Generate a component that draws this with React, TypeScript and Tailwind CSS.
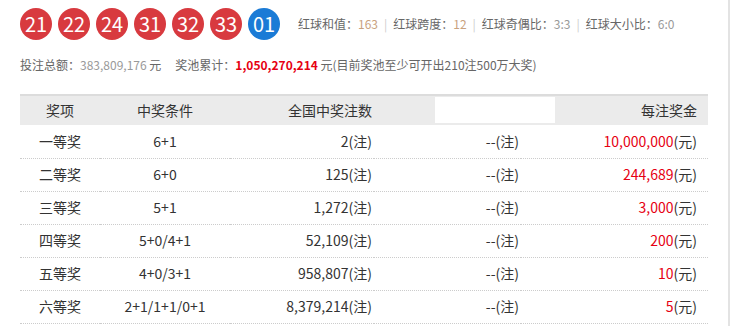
import React from "react"

const reds = ["21", "22", "24", "31", "32", "33"]
const blue = "01"

const stats = [
    { label: "红球和值：", value: "163", color: "text-[#c9a27e]" },
    { label: "红球跨度：", value: "12", color: "text-[#c9a27e]" },
    { label: "红球奇偶比：", value: "3:3", color: "text-[#999]" },
    { label: "红球大小比：", value: "6:0", color: "text-[#999]" },
]

const rows = [
    { name: "一等奖", cond: "6+1", count: "2", prize: "10,000,000" },
    { name: "二等奖", cond: "6+0", count: "125", prize: "244,689" },
    { name: "三等奖", cond: "5+1", count: "1,272", prize: "3,000" },
    { name: "四等奖", cond: "5+0/4+1", count: "52,109", prize: "200" },
    { name: "五等奖", cond: "4+0/3+1", count: "958,807", prize: "10" },
    { name: "六等奖", cond: "2+1/1+1/0+1", count: "8,379,214", prize: "5" },
]

function Ball({ n, isBlue }: { n: string; isBlue?: boolean }) {
    return (
        <span
            className={`flex h-8 w-8 items-center justify-center rounded-full text-[20px] text-white ${isBlue ? "bg-[#1b7bd6]" : "bg-[#d83a3f]"}`}
        >
            {n}
        </span>
    )
}

export default function App() {
    return (
        <div
            className="h-[326px] w-[730px] overflow-hidden border-r-2 border-[#e3e3e3] bg-white text-[#333]"
            style={{ fontFamily: '"Noto Sans CJK SC", sans-serif' }}
        >
            <div className="flex items-center pl-5 pt-2">
                <div className="flex gap-[6px]">
                    {reds.map((n) => (
                        <Ball key={n} n={n} />
                    ))}
                    <Ball n={blue} isBlue />
                </div>
                <div className="ml-[18px] flex items-center text-[12px] text-[#666]">
                    {stats.map((s, i) => (
                        <span key={s.label} className="flex items-center">
                            {i > 0 && <span className="mx-[6px] text-[#ccc]">|</span>}
                            {s.label}
                            <span className={s.color}>{s.value}</span>
                        </span>
                    ))}
                </div>
            </div>

            <div className="mt-[16px] pl-5 text-[12px] text-[#666]">
                投注总额：<span className="text-[#999]">383,809,176</span> 元
                <span className="ml-[14px]">奖池累计：</span>
                <span className="font-bold text-[#e60012]">1,050,270,214</span> 元(目前奖池至少可开出210注500万大奖)
            </div>

            <table className="ml-5 mt-[20px] w-[688px] table-fixed border-collapse text-[14px]">
                <thead>
                    <tr className="h-[30px] border-t-2 border-[#dcdcdc] bg-[#ebebeb]">
                        <th className="w-[80px] text-center font-normal">奖项</th>
                        <th className="w-[130px] text-center font-normal">中奖条件</th>
                        <th className="w-[144px] pr-[2px] text-right font-normal">全国中奖注数</th>
                        <th className="relative w-[147px] font-normal">
                            <div className="absolute left-[61px] top-[1px] h-[26px] w-[120px] bg-white"></div>
                        </th>
                        <th className="pr-[11px] text-right font-normal">每注奖金</th>
                    </tr>
                </thead>
                <tbody>
                    {rows.map((r) => (
                        <tr key={r.name} className="h-[33px] border-b border-dotted border-[#ccc]">
                            <td className="text-center">{r.name}</td>
                            <td className="text-center">{r.cond}</td>
                            <td className="pr-[2px] text-right">{r.count}(注)</td>
                            <td className="pr-[2px] text-right">--(注)</td>
                            <td className="pr-[11px] text-right">
                                <span className="text-[#e60012]">{r.prize}</span>(元)
                            </td>
                        </tr>
                    ))}
                </tbody>
            </table>
        </div>
    )
}
